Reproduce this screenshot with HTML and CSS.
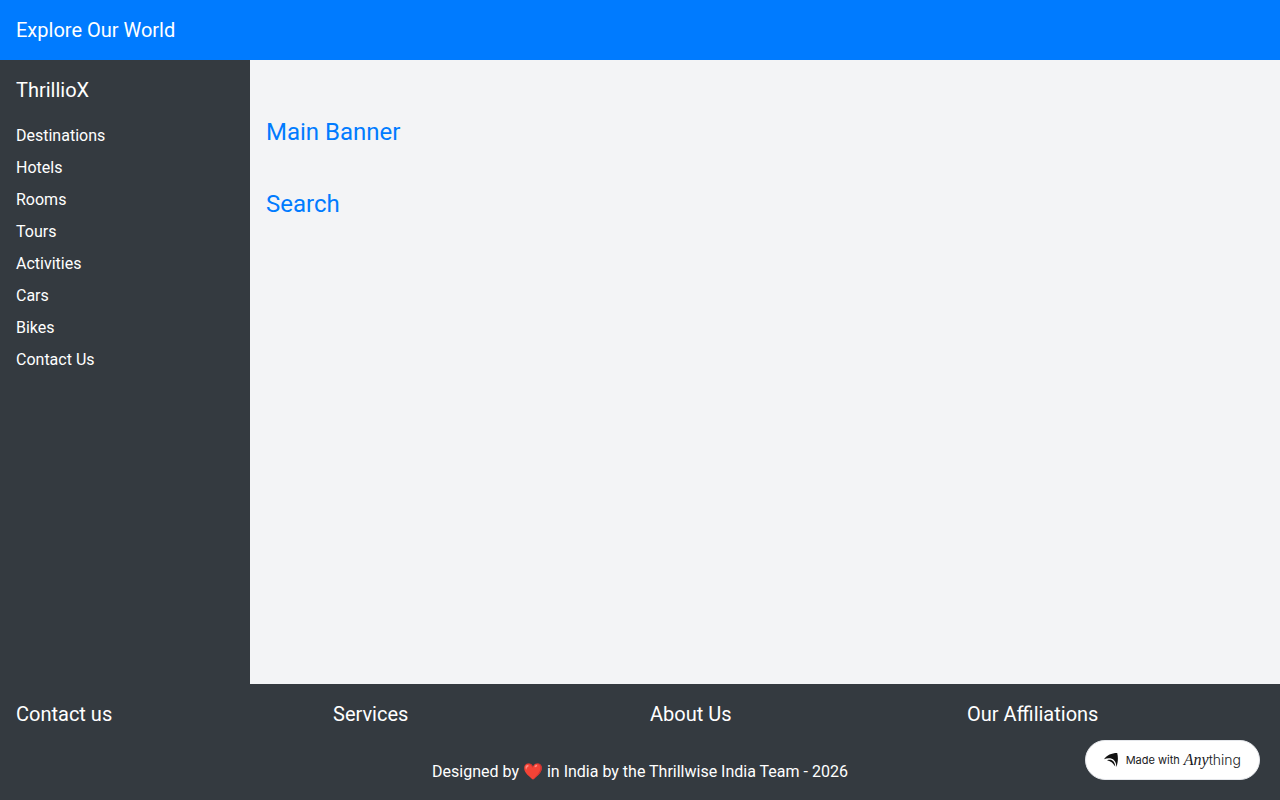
FILE: index.html
```html
<!DOCTYPE html>
<html lang="en">
<head>
    <meta charset="UTF-8">
    <meta name="viewport" content="width=device-width, initial-scale=1.0">
    <title>ThrillioX</title>
    <link rel="stylesheet" href="styles.css">
</head>
<body>
    <header class="top-bar">
        <h1 class="title">Explore Our World</h1>
    </header>

    <div class="content">
        <aside class="sidebar">
            <h2 class="title">ThrillioX</h2>
            <nav>
                <ul class="menu">
                    <li><a href="#destinations">Destinations</a></li>
                    <li><a href="#hotels">Hotels</a></li>
                    <li><a href="#rooms">Rooms</a></li>
                    <li><a href="#tours">Tours</a></li>
                    <li><a href="#activities">Activities</a></li>
                    <li><a href="#cars">Cars</a></li>
                    <li><a href="#bikes">Bikes</a></li>
                    <li><a href="#contact">Contact Us</a></li>
                </ul>
            </nav>
        </aside>

        <main class="main">
            <h2 class="section-title">Main Banner</h2>
            <h2 class="section-title">Search</h2>
        </main>
    </div>

    <footer class="footer">
        <div class="footer-columns">
            <h3 class="title" id="contact">Contact us</h3>
            <h3 class="title">Services</h3>
            <h3 class="title">About Us</h3>
            <h3 class="title">Our Affiliations</h3>
        </div>
        <p class="credits">Designed by ❤️ in India by the Thrillwise India Team - 2026</p>
    </footer>

    <a class="badge" href="#">
        <svg class="badge-icon" width="14" height="14" viewBox="0 0 14 14" aria-hidden="true">
            <path d="M0 6.200C3 2.200 7.400 0 13.200 0C14.400 4.600 14 9.500 12.400 14C12.200 11 11.800 9 10.200 7.400C7.800 5 4 4.900 0 6.200Z" fill="#111"/>
            <path d="M3 7.300C6 6.300 8.200 7 9.300 8.300C10.600 9.800 11.100 11.500 11.200 13.600C9.300 10.600 7.200 8.200 3 7.300Z" fill="#111"/>
        </svg>
        <span class="badge-text">Made with</span>
        <span class="badge-logo"><i>Any</i>thing</span>
    </a>
</body>
</html>
```
FILE: styles.css
```css
* {
    margin: 0;
    padding: 0;
    box-sizing: border-box;
}

body {
    display: flex;
    flex-direction: column;
    min-height: 100vh;
    font-family: Roboto, sans-serif;
    font-size: 16px;
    line-height: 24px;
    color: white;
    background-color: #f3f4f6;
}

a {
    color: inherit;
    text-decoration: none;
}

.title {
    font-size: 20px;
    line-height: 28px;
    font-weight: 400;
}

.top-bar {
    padding: 16px;
    background-color: #007bff;
}

.content {
    display: flex;
    flex: 1;
}

.sidebar {
    width: 250px;
    padding: 16px;
    background-color: #343a40;
}

.menu {
    margin-top: 16px;
    list-style: none;
}

.menu li {
    padding: 4px 0;
}

.main {
    flex: 1;
    padding: 16px;
}

.section-title {
    margin-top: 40px;
    font-size: 24px;
    line-height: 32px;
    font-weight: 400;
    color: #007bff;
}

.footer {
    padding: 16px;
    background-color: #343a40;
}

.footer-columns {
    display: grid;
    grid-template-columns: repeat(4, 1fr);
    gap: 20px;
}

.credits {
    margin-top: 32px;
    text-align: center;
}

.badge {
    position: fixed;
    right: 20px;
    bottom: 20px;
    display: flex;
    align-items: center;
    height: 40px;
    padding: 0 18px;
    border: 1px solid #e5e7eb;
    border-radius: 20px;
    background-color: white;
    color: #18191b;
}

.badge-text {
    margin: 0 4px 0 8px;
    font-family: Inter, sans-serif;
    font-size: 11px;
}

.badge-logo {
    font-family: Inter, sans-serif;
    font-size: 14px;
    font-weight: 300;
}

.badge-logo i {
    font-family: "Liberation Serif", "Times New Roman", serif;
    font-size: 16px;
}
```
